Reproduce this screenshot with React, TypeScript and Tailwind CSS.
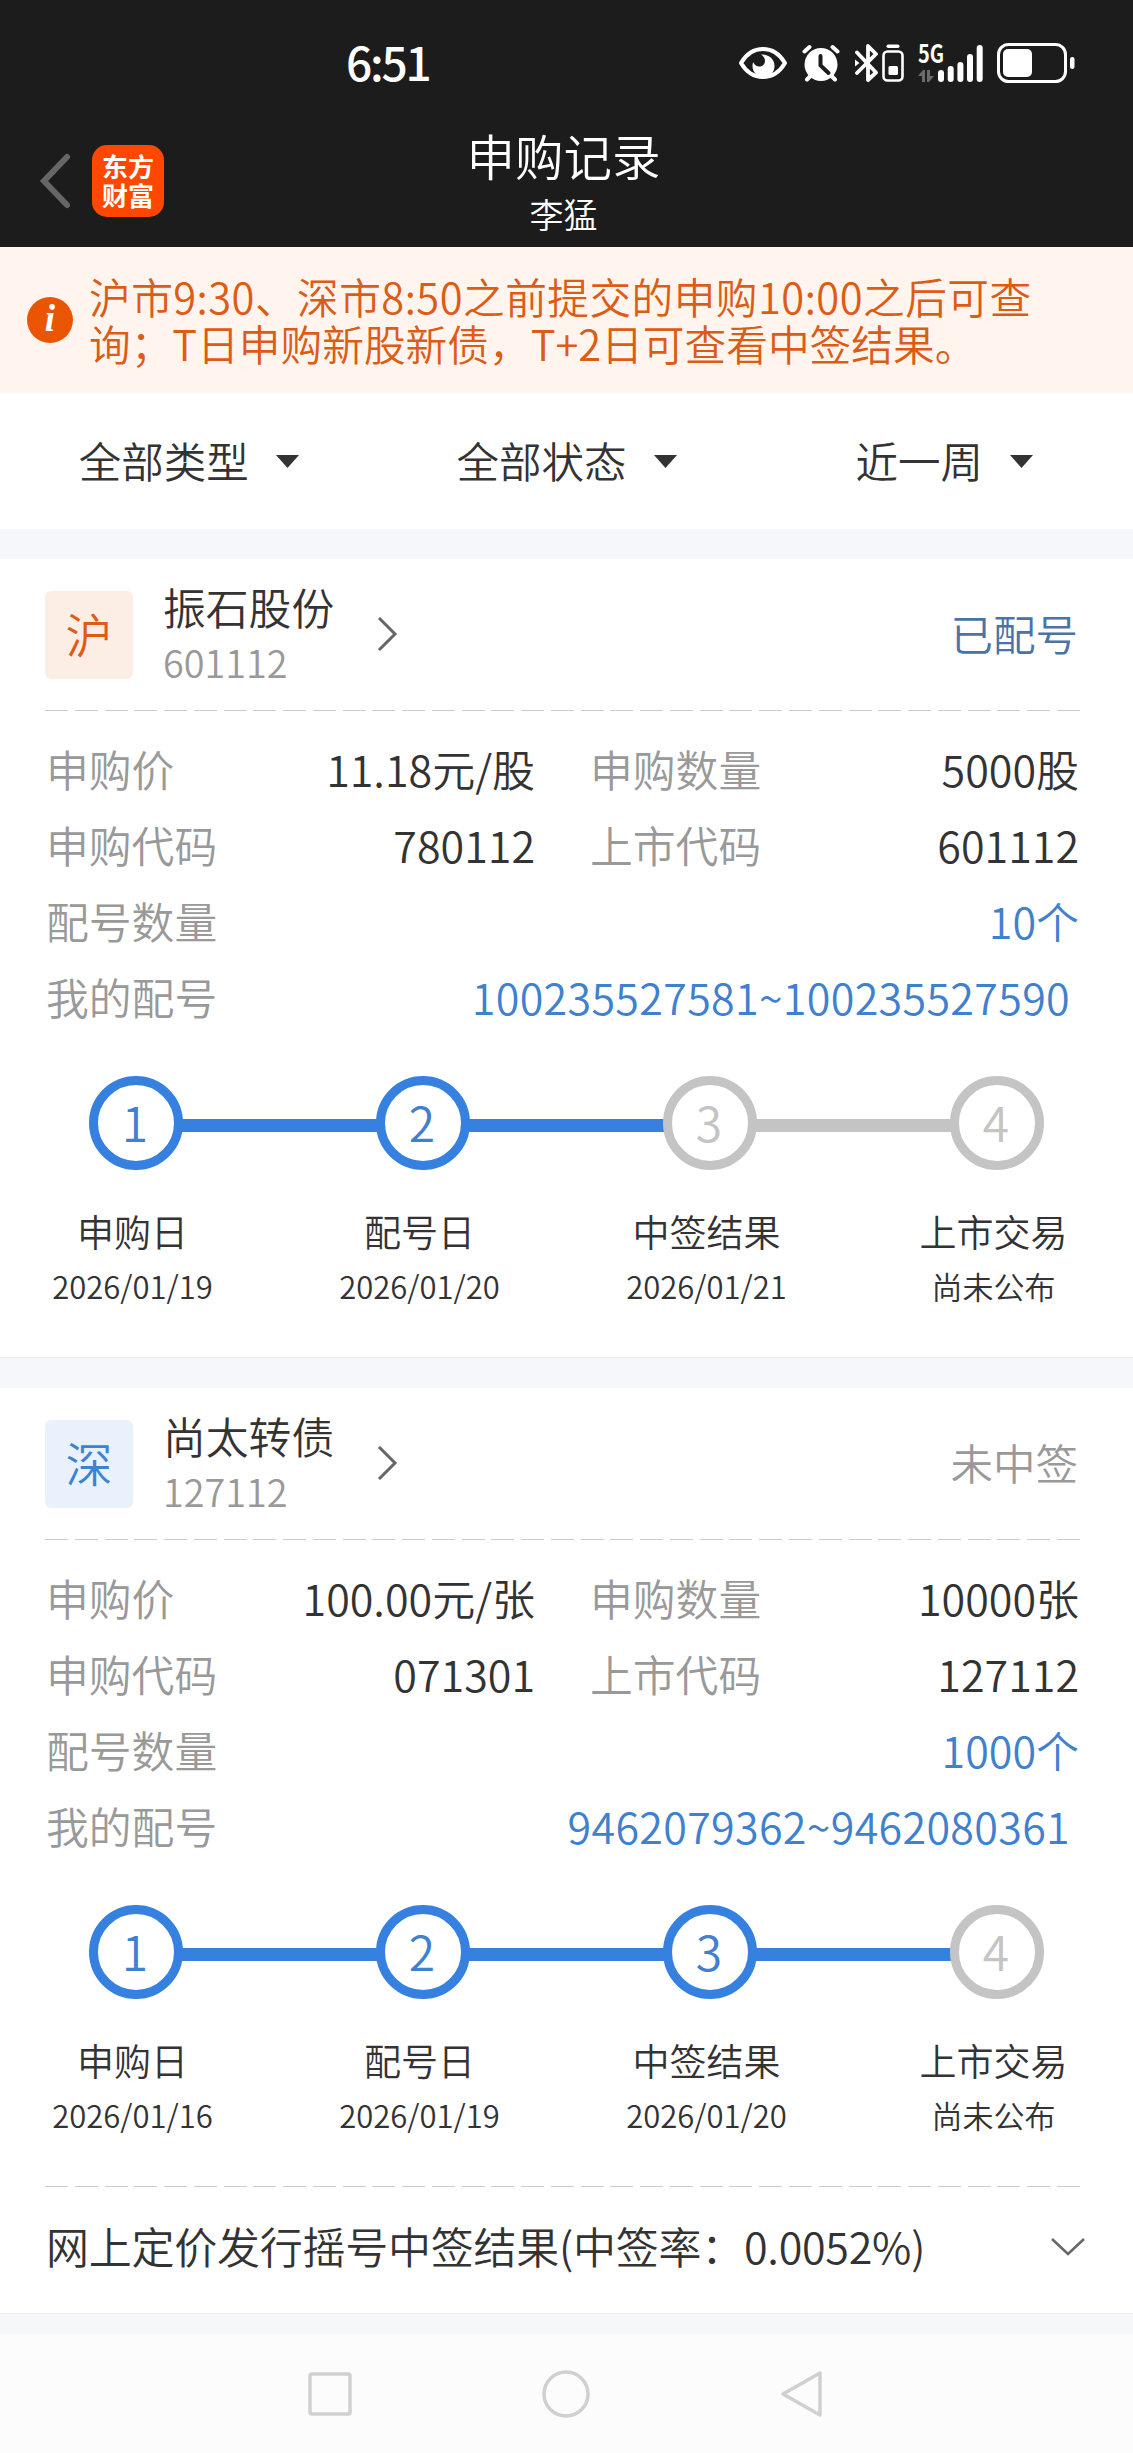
import clsx from "clsx";

type Step = { label: string; date: string };

type RecordItem = {
  market: string;
  marketClass: string;
  name: string;
  code: string;
  status: string;
  statusClass: string;
  price: string;
  amount: string;
  applyCode: string;
  listCode: string;
  count: string;
  numbers: string;
  doneSteps: number;
  steps: Step[];
  footer?: string;
};

const filters = ["全部类型", "全部状态", "近一周"];

const records: RecordItem[] = [
  {
    market: "沪",
    marketClass: "bg-[#fceee5] text-[#de5b14]",
    name: "振石股份",
    code: "601112",
    status: "已配号",
    statusClass: "text-[#4a73a8]",
    price: "11.18元/股",
    amount: "5000股",
    applyCode: "780112",
    listCode: "601112",
    count: "10个",
    numbers: "100235527581~100235527590",
    doneSteps: 2,
    steps: [
      { label: "申购日", date: "2026/01/19" },
      { label: "配号日", date: "2026/01/20" },
      { label: "中签结果", date: "2026/01/21" },
      { label: "上市交易", date: "尚未公布" },
    ],
  },
  {
    market: "深",
    marketClass: "bg-[#e9f2fc] text-[#3f82d2]",
    name: "尚太转债",
    code: "127112",
    status: "未中签",
    statusClass: "text-[#999]",
    price: "100.00元/张",
    amount: "10000张",
    applyCode: "071301",
    listCode: "127112",
    count: "1000个",
    numbers: "9462079362~9462080361",
    doneSteps: 3,
    steps: [
      { label: "申购日", date: "2026/01/16" },
      { label: "配号日", date: "2026/01/19" },
      { label: "中签结果", date: "2026/01/20" },
      { label: "上市交易", date: "尚未公布" },
    ],
    footer: "网上定价发行摇号中签结果(中签率：0.0052%)",
  },
];

function StatusIcons() {
  return (
    <div className="flex h-[42px] items-center text-white">
      <svg width="50" height="34" viewBox="0 0 50 34" fill="none">
        <path
          d="M3 17C8 8.500 16 3 25 3s17 5.500 22 14c-5 8.500-13 14-22 14S8 25.500 3 17Z"
          stroke="currentColor"
          strokeWidth="4"
          strokeLinejoin="round"
        />
        <path
          d="M23 8.500c8 0 13.500 4.500 13.500 11.500C36.500 26.500 32 31 25.500 31 19 31 14.500 26 14.500 20c0-1.500.2-2.700.7-3.800 1.500 3 3.500 4.300 6 4.300 3.300 0 5.800-2.300 5.800-5.500 0-2.800-1.500-5-4-6.500Z"
          fill="currentColor"
        />
      </svg>
      <svg className="ml-3.5" width="38" height="38" viewBox="0 0 38 38" fill="none">
        <circle cx="19" cy="20.500" r="16.500" fill="currentColor" />
        <path
          d="M2.500 7.500 7.500 3M35.500 7.500 30.500 3M5 35.500l3-3M33 35.500l-3-3"
          stroke="currentColor"
          strokeWidth="4"
          strokeLinecap="round"
        />
        <path d="M18.500 12v9.500l8 7.500" stroke="#1c1c1c" strokeWidth="4" strokeLinecap="round" />
      </svg>
      <svg className="ml-[15px]" width="50" height="38" viewBox="0 0 50 38" fill="none">
        <path
          d="M2 8.500 21 28.500l-8 7.500V2l8 8L2 29"
          stroke="currentColor"
          strokeWidth="3.800"
          strokeLinecap="round"
          strokeLinejoin="round"
        />
        <path d="M0 15.500 4.500 19 0 22.500Z" fill="currentColor" />
        <rect x="31.500" y="0.500" width="13" height="3.500" rx="1.700" fill="currentColor" />
        <rect x="28.500" y="7.500" width="19" height="29" rx="4" stroke="currentColor" strokeWidth="2.600" />
        <rect x="33.500" y="22" width="9.500" height="9" rx="1.500" fill="currentColor" />
      </svg>
      <div className="ml-[13px] flex h-[38px] items-end">
        <div className="flex h-full w-[20px] flex-col justify-between">
          <span className="origin-left scale-x-[0.8] text-[25px] leading-[16px] font-bold whitespace-nowrap">
            5G
          </span>
          <svg width="16" height="12" viewBox="0 0 16 12" fill="#6b6b6b">
            <path d="M0 6 5 0h2v12H4V6ZM9 0h3v6h4l-5 6H9Z" />
          </svg>
        </div>
        <svg width="46" height="37" viewBox="0 0 46 37" fill="currentColor">
          <rect x="0" y="25" width="6" height="12" rx="3" />
          <rect x="9.700" y="21" width="6" height="16" rx="3" />
          <rect x="19.400" y="17" width="6" height="20" rx="3" />
          <rect x="29" y="9" width="6" height="28" rx="3" />
          <rect x="38.700" y="0" width="6" height="37" rx="3" />
        </svg>
      </div>
      <svg className="ml-[13px]" width="78" height="40" viewBox="0 0 78 40" fill="none">
        <rect x="1.500" y="1.500" width="67" height="37" rx="10" stroke="currentColor" strokeWidth="3" />
        <rect x="6" y="6" width="29" height="28" rx="5" fill="currentColor" />
        <rect x="73" y="14" width="4.500" height="12" rx="2.200" fill="currentColor" />
      </svg>
    </div>
  );
}

function Header() {
  return (
    <header className="h-[247px] bg-[#1c1c1c] text-white">
      <div className="flex h-[125px] items-center justify-between pr-[58px] pl-[346px]">
        <span className="pb-[3px] text-[46px] leading-none font-medium tracking-[-2.200px]">6:51</span>
        <StatusIcons />
      </div>
      <div className="grid h-[122px] grid-cols-[1fr_auto_1fr]">
        <div className="flex h-[112px] items-center pl-[38px]">
          <svg width="32" height="56" viewBox="0 0 32 56" fill="none">
            <path d="M29 4 6 28l23 24" stroke="#666" strokeWidth="6" strokeLinecap="round" />
          </svg>
          <div className="ml-[22px] flex size-[72px] flex-col items-center justify-center rounded-[15px] bg-[#ff4700] pb-[2px] text-[26px] leading-[29px] font-bold">
            <span>东方</span>
            <span>财富</span>
          </div>
        </div>
        <div className="flex flex-col items-center pr-[6px]">
          <h1 className="text-[48.500px] leading-[61px]">申购记录</h1>
          <p className="text-[34px] leading-[56px]">李猛</p>
        </div>
      </div>
    </header>
  );
}

function Notice() {
  return (
    <div className="flex h-[146px] items-center bg-[#fff4ee] pl-[27px] text-[#dc5c16]">
      <div className="flex size-[46px] shrink-0 items-center justify-center rounded-full bg-[#ea5504] pb-1 font-['Liberation_Serif',serif] text-[37px] leading-none font-bold text-white italic">
        i
      </div>
      <p className="ml-[16px] text-[41.700px] leading-[47.500px] whitespace-nowrap">
        <span className="tracking-[0.450px]">沪市9:30、深市8:50之前提交的申购10:00之后可查</span>
        <br />
        询；T日申购新股新债，T+2日可查看中签结果。
      </p>
    </div>
  );
}

function FilterBar() {
  return (
    <div className="grid h-[136px] grid-cols-3 bg-white">
      {filters.map((label) => (
        <div key={label} className="flex items-center justify-center gap-[27px]">
          <span className="pb-[2px] text-[42.500px]">{label}</span>
          <svg width="23" height="13" viewBox="0 0 23 13" fill="#333">
            <path d="M0 0h23L11.500 13Z" />
          </svg>
        </div>
      ))}
    </div>
  );
}

function Dashes() {
  return (
    <div className="mr-[53px] ml-[45px] h-px bg-[repeating-linear-gradient(90deg,#ccc_0_23px,transparent_23px_29.760px)]" />
  );
}

function Field({ label, value }: { label: string; value: string }) {
  return (
    <div className="flex items-center justify-between">
      <span className="text-[42.800px] text-[#999]">{label}</span>
      <span>{value}</span>
    </div>
  );
}

function Progress({ steps, done }: { steps: Step[]; done: number }) {
  return (
    <>
      <div className="flex h-[94px] items-center pl-[89px]">
        {steps.map((step, i) => (
          <div key={step.label} className="flex items-center">
            {i > 0 && (
              <div
                className={clsx("-mx-0.5 mt-[5px] h-[13px] w-[197px]", i <= done ? "bg-[#3680e0]" : "bg-[#c4c4c4]")}
              />
            )}
            <div
              className={clsx(
                "relative flex size-[94px] items-center justify-center rounded-full border-[9px] bg-white pr-[2px] pb-[5px] text-[48px] leading-none",
                i < done ? "border-[#3680e0] text-[#3f80cf]" : "border-[#c4c4c4] text-[#c4c4c4]",
              )}
            >
              {i + 1}
            </div>
          </div>
        ))}
      </div>
      <div className="mt-[36px] -ml-[11px] grid w-[1148px] grid-cols-4">
        {steps.map((step) => (
          <div key={step.label} className="flex flex-col items-center">
            <span className="text-[37px] leading-[50px]">{step.label}</span>
            <span className="mt-[5px] text-[31px] leading-[50px]">{step.date}</span>
          </div>
        ))}
      </div>
    </>
  );
}

function RecordCard({ item }: { item: RecordItem }) {
  return (
    <section className="overflow-hidden border-b border-[#ececec] bg-white">
      <div className="flex h-[151px] items-center pr-[55px] pl-[45px]">
        <div
          className={clsx(
            "flex size-[88px] items-center justify-center rounded-md pb-[5px] text-[47px] leading-none",
            item.marketClass,
          )}
        >
          {item.market}
        </div>
        <div className="ml-[30px] flex flex-col">
          <span className="text-[42.800px] leading-[53px]">{item.name}</span>
          <span className="text-[37.800px] leading-[57px] text-[#999]">{item.code}</span>
        </div>
        <svg className="ml-[43px]" width="22" height="36" viewBox="0 0 22 36" fill="none">
          <path d="m2 1 16 16L2 33" stroke="#666" strokeWidth="3" />
        </svg>
        <span className={clsx("ml-auto pb-[2px] text-[42.500px]", item.statusClass)}>{item.status}</span>
      </div>
      <Dashes />
      <div className="mt-[19px] mr-[54px] ml-[46px] grid auto-rows-[76px] grid-cols-2 gap-x-[55px]">
        <Field label="申购价" value={item.price} />
        <Field label="申购数量" value={item.amount} />
        <Field label="申购代码" value={item.applyCode} />
        <Field label="上市代码" value={item.listCode} />
        <div className="col-span-2 flex items-center justify-between">
          <span className="text-[42.800px] text-[#999]">配号数量</span>
          <span className="text-[#3f80cf]">{item.count}</span>
        </div>
        <div className="col-span-2 flex items-center justify-between pr-[9px]">
          <span className="text-[42.800px] text-[#999]">我的配号</span>
          <span className="tracking-[0.320px] text-[#3f80cf]">{item.numbers}</span>
        </div>
      </div>
      <div className="mt-[42px]">
        <Progress steps={item.steps} done={item.doneSteps} />
      </div>
      {item.footer ? (
        <div className="pt-[46px]">
          <Dashes />
          <div className="flex h-[126px] items-center justify-between pr-[47px] pb-[7px] pl-[46px]">
            <span className="pb-[2px] tracking-[-0.250px]">{item.footer}</span>
            <svg width="36" height="20" viewBox="0 0 36 20" fill="none">
              <path d="m2 2 16 15L34 2" stroke="#666" strokeWidth="2.500" />
            </svg>
          </div>
        </div>
      ) : (
        <div className="h-[46px]" />
      )}
    </section>
  );
}

function NavBar() {
  return (
    <nav className="flex flex-1 items-center bg-[#fcfcfc] pl-[308px]">
      <svg width="44" height="44" viewBox="0 0 44 44" fill="none" stroke="#d0d0d0" strokeWidth="3.500">
        <rect x="2" y="2" width="40" height="40" rx="2" />
      </svg>
      <svg className="ml-[190px]" width="48" height="48" viewBox="0 0 48 48" fill="none" stroke="#d0d0d0" strokeWidth="3.500">
        <circle cx="24" cy="24" r="22" />
      </svg>
      <svg className="ml-[190px]" width="44" height="48" viewBox="0 0 44 48" fill="none" stroke="#d0d0d0" strokeWidth="3.500" strokeLinejoin="round">
        <path d="M40 3v42L3 24Z" />
      </svg>
    </nav>
  );
}

export default function App() {
  return (
    <div
      lang="zh-CN"
      className="flex h-[2453px] w-[1133px] flex-col overflow-hidden bg-[#f6f7fa] font-['Noto_Sans_CJK_SC',sans-serif] text-[43px] leading-none font-[350] text-[#333]"
    >
      <Header />
      <Notice />
      <FilterBar />
      <main className="mt-[30px] mb-5 flex flex-col gap-[30px]">
        {records.map((item) => (
          <RecordCard key={item.code} item={item} />
        ))}
      </main>
      <NavBar />
    </div>
  );
}
